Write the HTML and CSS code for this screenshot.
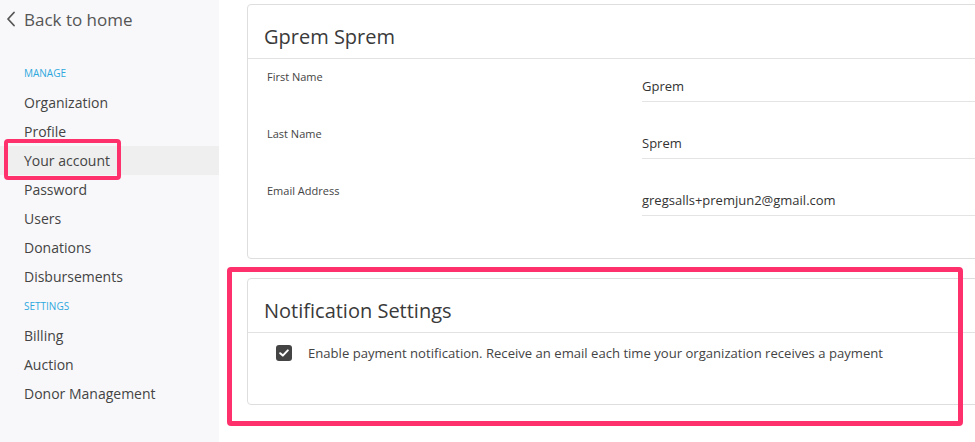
FILE: index.html
```html
<!DOCTYPE html>
<html lang="en">
<head>
    <meta charset="UTF-8">
    <meta name="viewport" content="width=device-width, initial-scale=1.0">
    <title>Your account</title>
    <link rel="stylesheet" href="styles.css">
</head>
<body>
    <div class="sidebar">
        <a class="back-link" href="#">
            <svg class="back-icon" width="10" height="16" viewBox="0 0 10 16"><path d="M8 1.5 L2 8 L8 14.5" fill="none" stroke="#555" stroke-width="1.8" stroke-linecap="round" stroke-linejoin="round"/></svg>
            Back to home
        </a>
        <div class="nav-label">MANAGE</div>
        <a class="nav-item" href="#">Organization</a>
        <a class="nav-item" href="#">Profile</a>
        <a class="nav-item active" href="#">Your account<span class="mark mark-nav"></span></a>
        <a class="nav-item" href="#">Password</a>
        <a class="nav-item" href="#">Users</a>
        <a class="nav-item" href="#">Donations</a>
        <a class="nav-item" href="#">Disbursements</a>
        <div class="nav-label">SETTINGS</div>
        <a class="nav-item" href="#">Billing</a>
        <a class="nav-item" href="#">Auction</a>
        <a class="nav-item" href="#">Donor Management</a>
    </div>

    <div class="main">
        <div class="card">
            <div class="card-header">Gprem Sprem</div>
            <div class="card-body fields">
                <div class="field">
                    <div class="field-label">First Name</div>
                    <div class="field-value">Gprem</div>
                </div>
                <div class="field">
                    <div class="field-label">Last Name</div>
                    <div class="field-value">Sprem</div>
                </div>
                <div class="field">
                    <div class="field-label">Email Address</div>
                    <div class="field-value">gregsalls+premjun2@gmail.com</div>
                </div>
            </div>
        </div>

        <div class="card card-notify">
            <span class="mark mark-card"></span>
            <div class="card-header">Notification Settings</div>
            <div class="card-body">
                <label class="check-row">
                    <span class="checkbox">
                        <svg width="10" height="8" viewBox="0 0 10 8"><path d="M1.2 4.2 L3.8 6.6 L8.8 1.4" fill="none" stroke="#fff" stroke-width="2" stroke-linecap="round" stroke-linejoin="round"/></svg>
                    </span>
                    Enable payment notification. Receive an email each time your organization receives a payment
                </label>
            </div>
        </div>
    </div>
</body>
</html>
```

FILE: styles.css
```css
body {
    margin: 0;
    display: flex;
    min-height: 100vh;
    overflow: hidden;
    background: #fff;
    font-family: 'Open Sans', 'Liberation Sans', sans-serif;
    color: #333;
}
a {
    text-decoration: none;
    color: inherit;
}
.sidebar {
    width: 219px;
    flex-shrink: 0;
    background: #f8f8fa;
    display: flex;
    flex-direction: column;
}
.back-link {
    display: flex;
    align-items: center;
    height: 38px;
    padding-left: 6px;
    margin-bottom: 20px;
    font-size: 17px;
    color: #555;
}
.back-icon {
    margin-right: 8px;
}
.nav-label {
    line-height: 30px;
    padding-left: 24px;
    font-size: 10px;
    color: #2fa8de;
}
.nav-item {
    position: relative;
    line-height: 29px;
    padding-left: 24px;
    font-size: 14px;
    color: #444;
}
.nav-item.active {
    background: #efeff0;
}
.mark {
    position: absolute;
    border: 4px solid #ff316c;
    border-radius: 4px;
    box-sizing: border-box;
    pointer-events: none;
}
.mark-nav {
    left: 4px;
    top: -7px;
    width: 117px;
    height: 41px;
}
.main {
    flex: 1;
    overflow: hidden;
    padding: 4px 0 0 28px;
}
.card {
    position: relative;
    width: 780px;
    border: 1px solid #dedede;
    border-radius: 4px;
    background: #fff;
    box-sizing: border-box;
}
.card-header {
    height: 49px;
    padding-top: 4px;
    line-height: 56px;
    padding-left: 16px;
    font-size: 20px;
    color: #3a3a3a;
    border-bottom: 1px solid #e2e2e2;
}
.fields {
    display: flex;
    flex-direction: column;
    gap: 24px;
    padding: 10px 0 42px;
}
.field {
    display: flex;
}
.field-label {
    width: 394px;
    padding-left: 19px;
    box-sizing: border-box;
    font-size: 11px;
    line-height: 16px;
    color: #444;
}
.field-value {
    flex: 1;
    margin-top: 7px;
    line-height: 20px;
    padding-bottom: 5px;
    font-size: 13px;
    color: #333;
    border-bottom: 1px solid #e4e4e4;
}
.card-notify {
    margin-top: 19px;
}
.card-notify .card-body {
    padding: 11px 0 0 28px;
    height: 71px;
    box-sizing: border-box;
}
.mark-card {
    left: -21px;
    top: -12px;
    width: 736px;
    height: 159px;
    border-width: 5px;
}
.check-row {
    display: flex;
    align-items: center;
    gap: 16px;
    font-size: 13.1px;
    color: #444;
}
.checkbox {
    width: 16px;
    height: 16px;
    border-radius: 3px;
    background: #444;
    display: flex;
    align-items: center;
    justify-content: center;
}
```
